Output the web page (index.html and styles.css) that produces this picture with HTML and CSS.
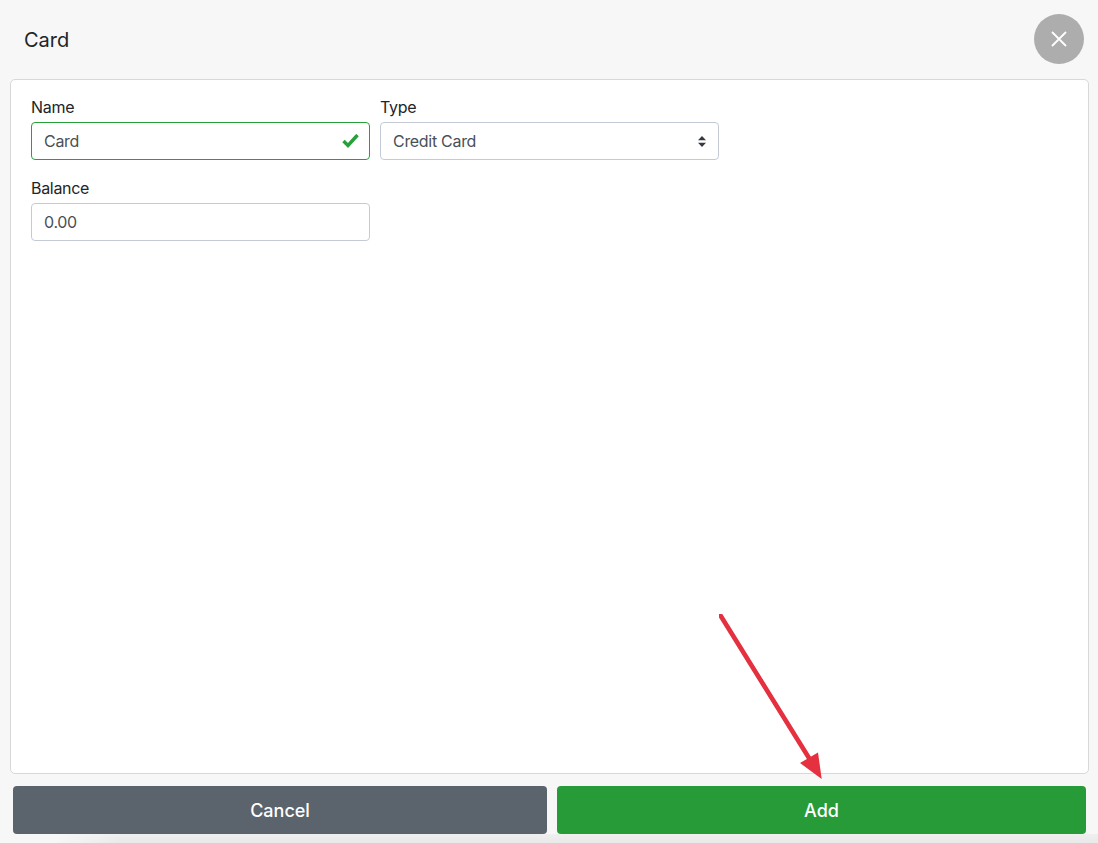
FILE: index.html
```html
<!DOCTYPE html>
<html lang="en">
<head>
<meta charset="utf-8">
<title>Card</title>
<link rel="stylesheet" href="styles.css">
</head>
<body>
<div class="modal">
  <header class="modal-header">
    <h1 class="modal-title">Card</h1>
    <button class="close" type="button" aria-label="Close">
      <svg width="16" height="16" viewBox="0 0 16 16"><path d="M1 1L15 15M15 1L1 15" stroke="#fff" stroke-width="1.8" fill="none"/></svg>
    </button>
  </header>
  <main class="panel">
    <div class="form-row">
      <div class="field">
        <label class="label">Name</label>
        <div class="control valid">
          <span>Card</span>
          <svg class="check" width="18" height="14" viewBox="0 0 18 14"><path d="M2.500 7L7 11.500L16.500 1" stroke="#28a03a" stroke-width="3.400" fill="none"/></svg>
        </div>
      </div>
      <div class="field">
        <label class="label">Type</label>
        <div class="control">
          <span>Credit Card</span>
          <svg class="updown" width="8" height="11" viewBox="0 0 8 11"><path d="M4 0L8 4.200H0ZM4 11L0 6.800H8Z" fill="#343a40"/></svg>
        </div>
      </div>
    </div>
    <div class="form-row">
      <div class="field">
        <label class="label">Balance</label>
        <div class="control"><span>0.00</span></div>
      </div>
    </div>
  </main>
  <footer class="modal-footer">
    <button class="btn btn-cancel" type="button">Cancel</button>
    <button class="btn btn-add" type="button">Add</button>
  </footer>
</div>
<svg class="arrow" width="120" height="180" viewBox="0 0 120 180"><path d="M1.500 1.500L90 144" stroke="#e4303f" stroke-width="4.600" fill="none" stroke-linecap="round"/><path d="M102.700 165L81 149L99 138.500Z" fill="#e4303f"/></svg>
</body>
</html>
```
FILE: styles.css
```css
* { box-sizing: border-box; }
html, body { margin: 0; height: 100%; }
body {
  position: relative;
  overflow: hidden;
  background: #f7f7f7;
  color: #212529;
  font-family: Inter, "Liberation Sans", sans-serif;
  font-size: 16px;
  line-height: 24px;
  letter-spacing: -0.3px;
}
body::after {
  content: "";
  position: absolute;
  left: 0;
  right: 0;
  bottom: 0;
  height: 9px;
  background:
    linear-gradient(to bottom, rgba(247, 247, 247, 0.45), rgba(247, 247, 247, 0)),
    linear-gradient(to right, #f7f7f7 55px, #e9e9e9 120px);
}
.modal { display: flex; flex-direction: column; height: 843px; }
.modal-header {
  display: flex;
  align-items: center;
  justify-content: space-between;
  height: 79px;
  padding: 0 14px 1px 24px;
}
.modal-title { margin: 2px 0 0; font-size: 20px; font-weight: 400; letter-spacing: 0; color: #212529; }
.close {
  display: flex;
  align-items: center;
  justify-content: center;
  width: 50px;
  height: 50px;
  padding: 0;
  border: 0;
  border-radius: 50%;
  background: #adadad;
}
.panel {
  height: 695px;
  margin: 0 9px 0 10px;
  padding: 15px 20px;
  background: #fff;
  border: 1px solid #d8d8d8;
  border-radius: 5px;
}
.form-row { display: flex; gap: 10px; margin-bottom: 16px; }
.field { width: 339px; }
.label { display: block; margin-bottom: 3px; }
.control {
  display: flex;
  align-items: center;
  justify-content: space-between;
  height: 38px;
  padding: 0 12px;
  border: 1px solid #c5cbd6;
  border-radius: 4px;
  background: #fff;
  color: #495057;
}
.valid { border-color: #28a03a; }
.check { margin-right: -2px; }
.modal-footer { display: flex; gap: 10px; padding: 12px 12px 9px 13px; }
.btn {
  height: 48px;
  padding: 1px 0 0;
  border: 0;
  border-radius: 4px;
  color: #fff;
  font: 500 18px/24px Inter, "Liberation Sans", sans-serif;
}
.btn-cancel { width: 534px; background: #5b636d; }
.btn-add { width: 529px; background: #269b37; }
.arrow { position: absolute; left: 719px; top: 614px; }
```
